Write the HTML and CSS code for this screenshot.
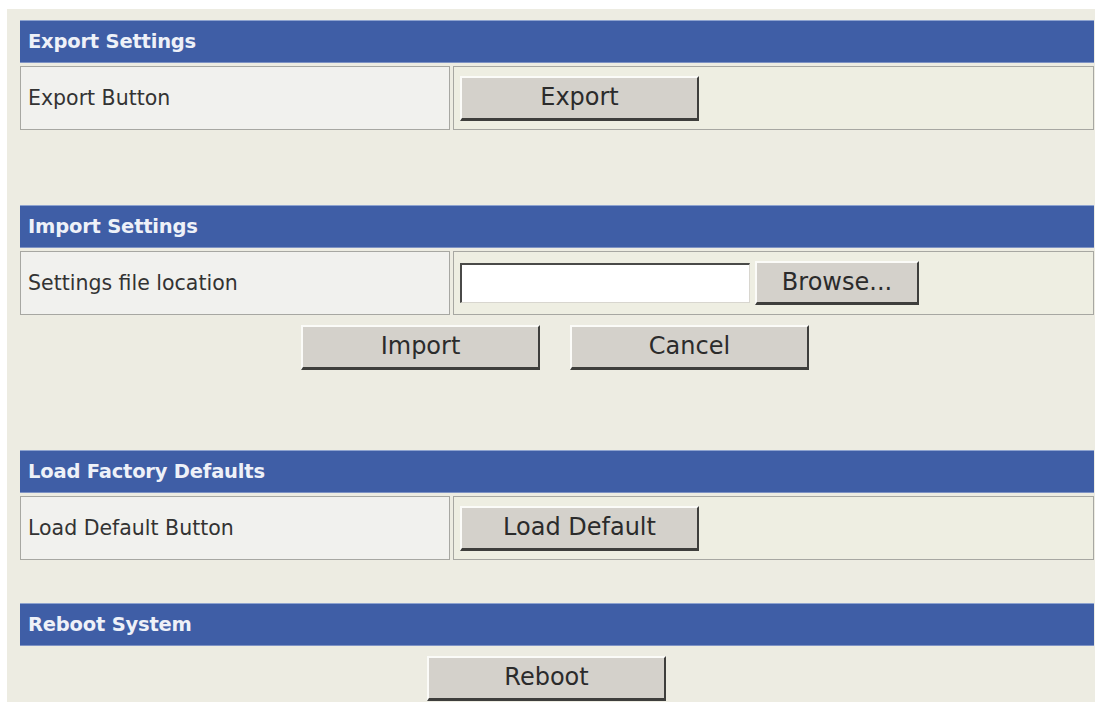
FILE: index.html
```html
<!DOCTYPE html>
<html>
<head>
<meta charset="utf-8">
<title>System Settings</title>
<link rel="stylesheet" href="styles.css">
</head>
<body>
<div class="page">
  <section class="block block-export">
    <div class="head">Export Settings</div>
    <div class="row">
      <div class="label">Export Button</div>
      <div class="field">
        <button class="btn btn-wide">Export</button>
      </div>
    </div>
  </section>

  <section class="block block-import">
    <div class="head">Import Settings</div>
    <div class="row">
      <div class="label">Settings file location</div>
      <div class="field">
        <span class="file-input"></span>
        <button class="btn btn-browse">Browse...</button>
      </div>
    </div>
    <div class="actions">
      <button class="btn btn-wide">Import</button>
      <button class="btn btn-wide">Cancel</button>
    </div>
  </section>

  <section class="block block-defaults">
    <div class="head">Load Factory Defaults</div>
    <div class="row">
      <div class="label">Load Default Button</div>
      <div class="field">
        <button class="btn btn-wide">Load Default</button>
      </div>
    </div>
  </section>

  <section class="block block-reboot">
    <div class="head">Reboot System</div>
    <div class="actions actions-reboot">
      <button class="btn btn-wide">Reboot</button>
    </div>
  </section>
</div>
</body>
</html>
```

FILE: styles.css
```css
html, body {
  margin: 0;
  padding: 0;
  background: #ffffff;
  height: 100%;
  overflow: hidden;
}

.page {
  margin: 9px 0 0 7px;
  padding: 11px 1px 0 13px;
  background: #edece2;
  height: 700px;
  font-family: "DejaVu Sans", Verdana, sans-serif;
  color: #2a2a2a;
}

.block {
  display: flex;
  flex-direction: column;
}

.block-import { margin-top: 75px; }
.block-defaults { margin-top: 80px; }
.block-reboot { margin-top: 43px; }

.head {
  height: 43px;
  display: flex;
  align-items: center;
  padding-left: 8px;
  background: #3f5ea6;
  border-top: 1px solid #8ea3cf;
  border-bottom: 1px solid #7f93c4;
  box-sizing: border-box;
  color: #eef1f8;
  font-weight: bold;
  font-size: 19.5px;
  letter-spacing: -0.2px;
}

.row {
  margin-top: 3px;
  display: grid;
  grid-template-columns: 430px 1fr;
  column-gap: 3px;
  height: 64px;
}

.label {
  display: flex;
  align-items: center;
  padding-left: 7px;
  background: #f1f1ee;
  border: 1px solid #a7a7a2;
  font-size: 20.5px;
  color: #333;
}

.field {
  display: flex;
  align-items: center;
  padding-left: 6px;
  gap: 5px;
  background: #eeeee2;
  border: 1px solid #a7a7a2;
}

.btn {
  height: 45px;
  padding: 0 0 2px;
  background: #d4d1cb;
  border-top: 2px solid #fbfbf8;
  border-left: 2px solid #fbfbf8;
  border-right: 2px solid #3e3e3c;
  border-bottom: 3px solid #3e3e3c;
  box-sizing: border-box;
  font-family: "DejaVu Sans", Verdana, sans-serif;
  font-size: 24px;
  color: #2b2b2b;
}

.btn-wide { width: 239px; }

.btn-browse {
  width: 164px;
  height: 44px;
}

.file-input {
  width: 290px;
  height: 40px;
  background: #ffffff;
  border-top: 2px solid #4a4a48;
  border-left: 2px solid #4a4a48;
  border-right: 1px solid #d8d6cf;
  border-bottom: 1px solid #d8d6cf;
  box-sizing: border-box;
}

.actions {
  display: flex;
  justify-content: flex-start;
  gap: 30px;
  margin-top: 10px;
  padding-left: 281px;
}

.actions-reboot {
  padding-left: 407px;
}
```
